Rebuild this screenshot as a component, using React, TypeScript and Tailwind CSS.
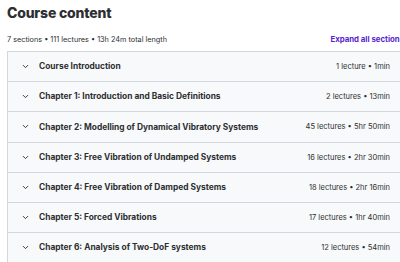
import React from 'react';
import { ChevronDown } from 'lucide-react';

interface Section {
  title: string;
  meta: string;
}

const SECTIONS: Section[] = [
  { title: 'Course Introduction', meta: '1 lecture • 1min' },
  { title: 'Chapter 1: Introduction and Basic Definitions', meta: '2 lectures • 13min' },
  { title: 'Chapter 2: Modelling of Dynamical Vibratory Systems', meta: '45 lectures • 5hr 50min' },
  { title: 'Chapter 3: Free Vibration of Undamped Systems', meta: '16 lectures • 2hr 30min' },
  { title: 'Chapter 4: Free Vibration of Damped Systems', meta: '18 lectures • 2hr 16min' },
  { title: 'Chapter 5: Forced Vibrations', meta: '17 lectures • 1hr 40min' },
  { title: 'Chapter 6: Analysis of Two-DoF systems', meta: '12 lectures • 54min' },
];

export default function App() {
  return (
    <div
      className="w-[400px] h-[262px] overflow-hidden bg-white text-[#2d2f31]"
      style={{ fontFamily: 'Inter, "Liberation Sans", sans-serif' }}
    >
      <div className="w-[397px] ml-[7px]">
        {/* header */}
        <h2 className="text-[14px] leading-[20px] font-extrabold pt-[3px] tracking-[-0.2px]">Course content</h2>
        <div className="flex items-center justify-between mt-[11px] h-[12px]">
          <span className="text-[7.3px]">7 sections • 111 lectures • 13h 24m total length</span>
          <span className="text-[7.8px] font-bold text-[#5624d0] whitespace-nowrap">Expand all sections</span>
        </div>

        {/* sections */}
        <div className="mt-[5px] border border-[#d1d7dc] border-b-0">
          {SECTIONS.map((s) => (
            <div
              key={s.title}
              className="flex items-center h-[30.2px] bg-[#f7f9fa] border-b border-[#d1d7dc] pl-[13px] pr-[13px]"
            >
              <ChevronDown size={9} strokeWidth={2.5} className="shrink-0" />
              <span className="ml-[9px] text-[8.4px] font-bold whitespace-nowrap">{s.title}</span>
              <span className="ml-auto text-[7.5px] whitespace-nowrap">{s.meta}</span>
            </div>
          ))}
        </div>
      </div>
    </div>
  );
}
